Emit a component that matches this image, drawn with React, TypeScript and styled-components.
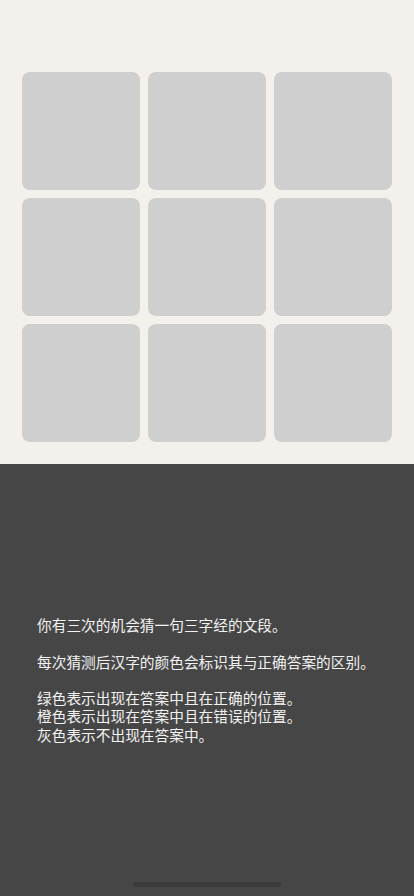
import React from "react";
import styled, { createGlobalStyle } from "styled-components";

const GlobalStyle = createGlobalStyle`
  html, body {
    margin: 0;
    padding: 0;
    background: #464646;
  }
  * {
    box-sizing: border-box;
  }
`;

const paragraphs = [
  ["你有三次的机会猜一句三字经的文段。"],
  ["每次猜测后汉字的颜色会标识其与正确答案的区别。"],
  [
    "绿色表示出现在答案中且在正确的位置。",
    "橙色表示出现在答案中且在错误的位置。",
    "灰色表示不出现在答案中。",
  ],
];

const App = () => (
  <>
    <GlobalStyle />
    <Page>
      <Board>
        <Grid>
          {Array.from({ length: 9 }).map((_, i) => (
            <Tile key={i} />
          ))}
        </Grid>
      </Board>
      <Panel>
        <Rules>
          {paragraphs.map((lines, i) => (
            <Paragraph key={i}>
              {lines.map((line) => (
                <Line key={line}>{line}</Line>
              ))}
            </Paragraph>
          ))}
        </Rules>
        <HomeIndicator />
      </Panel>
    </Page>
  </>
);

const Page = styled.div`
  width: 414px;
  height: 896px;
  display: flex;
  flex-direction: column;
  font-family: "Noto Sans CJK SC", "Noto Sans", sans-serif;
`;

const Board = styled.div`
  background-color: #f4f0ec;
  padding: 72px 22px 22px;
`;

const Grid = styled.div`
  display: grid;
  grid-template-columns: repeat(3, 118px);
  grid-auto-rows: 118px;
  gap: 8px;
`;

const Tile = styled.div`
  background-color: #cfcfcf;
  border-radius: 8px;
`;

const Panel = styled.div`
  flex: 1;
  background-color: #464646;
  display: flex;
  flex-direction: column;
  padding: 152px 0 9px 37px;
`;

const Rules = styled.div`
  color: #f2f2f2;
  font-size: 14.7px;
  line-height: 18.3px;
`;

const Paragraph = styled.div`
  margin-bottom: 18.3px;
`;

const Line = styled.div``;

const HomeIndicator = styled.div`
  margin-top: auto;
  align-self: center;
  margin-left: -37px;
  width: 148px;
  height: 5px;
  border-radius: 3px;
  background-color: #3a3a3a;
`;

export default App;
